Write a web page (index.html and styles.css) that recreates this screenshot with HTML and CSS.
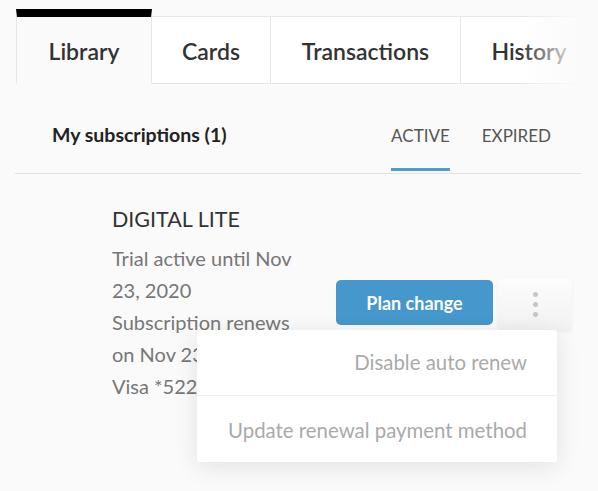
FILE: index.html
```html
<!DOCTYPE html>
<html lang="en">
<head>
    <meta charset="UTF-8">
    <meta name="viewport" content="width=device-width, initial-scale=1.0">
    <title>My account</title>
    <link rel="stylesheet" href="styles.css">
</head>
<body>

    <nav class="tabs">
        <div class="tab active">Library</div>
        <div class="tab">Cards</div>
        <div class="tab">Transactions</div>
        <div class="tab">History</div>
    </nav>

    <div class="subheader">
        <h2>My subscriptions (1)</h2>
        <div class="filters">
            <span class="filter selected">ACTIVE</span>
            <span class="filter">EXPIRED</span>
        </div>
    </div>

    <div class="subscription">
        <div class="info">
            <h3>DIGITAL LITE</h3>
            <p>Trial active until Nov 23, 2020</p>
            <p>Subscription renews on Nov 23, 2020</p>
            <p>Visa *5228</p>
        </div>
        <div class="actions">
            <button class="plan-btn">Plan change</button>
            <button class="more-btn"><span></span><span></span><span></span></button>

            <!-- options menu, opened from the three dots -->
            <ul class="menu">
                <li>Disable auto renew</li>
                <li>Update renewal payment method</li>
            </ul>
        </div>
    </div>

</body>
</html>
```

FILE: styles.css
```css
body {
    font-family: Lato, "Liberation Sans", sans-serif;
    background-color: #fafafa;
    margin: 0;
    min-height: 100vh;
    color: #333;
}

/* top tabs */
.tabs {
    position: relative;
    display: flex;
    align-items: flex-end;
    width: 564px;
    margin: 9px 0 0 16px;
    overflow: hidden;
}
.tabs::after {
    content: "";
    position: absolute;
    top: 0;
    right: 0;
    bottom: 0;
    width: 60px;
    background: linear-gradient(to right, rgba(250, 250, 250, 0), #fafafa);
}
.tab {
    flex-shrink: 0;
    height: 66px;
    line-height: 68px;
    text-align: center;
    font-size: 23px;
    font-weight: 600;
    color: #333;
    background-color: #fff;
    border-top: 1px solid #e6e6e6;
    border-bottom: 1px solid #e6e6e6;
    border-right: 1px solid #e6e6e6;
}
.tab:nth-child(1) { width: 134px; }
.tab:nth-child(2) { width: 118px; }
.tab:nth-child(3) { width: 189px; }
.tab:nth-child(4) { width: 136px; }
.tab.active {
    background-color: #fafafa;
    border-top: 8px solid #000;
    border-left: 1px solid #e6e6e6;
    border-bottom-color: #fafafa;
}

/* subscriptions header */
.subheader {
    display: flex;
    align-items: center;
    justify-content: space-between;
    height: 89px;
    margin: 0 17px 0 15px;
    border-bottom: 1px solid #e0e0e0;
}
.subheader h2 {
    margin: 12px 0 0 37px;
    font-size: 19.5px;
    font-weight: bold;
    color: #222;
}
.filters {
    display: flex;
    gap: 32px;
    align-self: stretch;
    margin-right: 30px;
}
.filter {
    display: flex;
    align-items: center;
    padding-top: 18px;
    font-size: 17px;
    color: #555;
    border-bottom: 3px solid transparent;
    margin-bottom: 2px;
}
.filter.selected {
    border-bottom-color: #4a9ed3;
}

/* subscription row */
.subscription {
    display: flex;
    align-items: flex-start;
    padding: 32px 26px 0 112px;
}
.info {
    width: 190px;
}
.info h3 {
    margin: 0 0 10px;
    font-size: 21.5px;
    font-weight: normal;
    color: #333;
}
.info p {
    margin: 0;
    font-size: 20px;
    line-height: 32px;
    color: #777;
}

.actions {
    position: relative;
    display: flex;
    align-items: flex-start;
    gap: 5px;
    margin: 72px 0 0 auto;
}
.plan-btn {
    width: 157px;
    height: 45px;
    margin-top: 2px;
    border: none;
    border-radius: 5px;
    background-color: #4597cc;
    color: #fff;
    font-family: inherit;
    font-size: 18px;
    font-weight: bold;
}
.more-btn {
    display: flex;
    flex-direction: column;
    align-items: center;
    justify-content: center;
    gap: 5px;
    width: 74px;
    height: 53px;
    border: none;
    border-radius: 3px;
    background: linear-gradient(#fcfcfc, #f2f2f2);
    box-shadow: 0 1px 3px rgba(0, 0, 0, 0.06);
}
.more-btn span {
    width: 5px;
    height: 5px;
    border-radius: 50%;
    background-color: #c6c6c6;
}

.menu {
    position: absolute;
    top: 52px;
    right: 15px;
    width: 360px;
    margin: 0;
    padding: 0;
    list-style: none;
    background-color: #fff;
    border-radius: 3px;
    box-shadow: 0 4px 24px rgba(0, 0, 0, 0.1);
}
.menu li {
    height: 65px;
    line-height: 65px;
    padding-right: 30px;
    text-align: right;
    font-size: 20.4px;
    color: #aaa;
}
.menu li + li {
    height: 66px;
    line-height: 68px;
    border-top: 1px solid #eee;
}
```
